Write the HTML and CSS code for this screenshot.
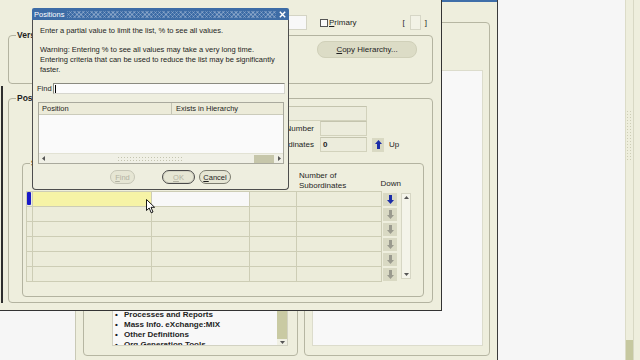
FILE: index.html
```html
<!DOCTYPE html>
<html>
<head>
<meta charset="utf-8">
<title>Positions</title>
<link rel="stylesheet" href="styles.css">
</head>
<body>
<div class="screen">
  <div class="desk">

    <div class="win nav">
      <div class="nav-title"></div>
      <div class="nav-body">
        <div class="nframe nleft">
          <div class="nlist">
            <ul class="items">
              <li>Work Structures</li>
              <li>Total Compensation</li>
              <li>Processes and Reports</li>
              <li>Mass Info. eXchange:MIX</li>
              <li>Other Definitions</li>
              <li>Org Generation Tools</li>
            </ul>
            <div class="lscroll">
              <div class="ltrack"><div class="lthumb"></div></div>
              <div class="larrow"><svg width="5" height="3" viewBox="0 0 5 3"><path d="M0 0H5L2.5 3Z" fill="#555"/></svg></div>
            </div>
          </div>
        </div>
        <div class="nframe nright"><div class="nwhite"></div></div>
      </div>
    </div>

    <div class="win main">
      <div class="toprow">
        <span class="tfield"></span>
        <span class="chk"><span class="box"></span><u>P</u>rimary</span>
        <span class="brk"><span>[</span><span class="bbox"></span><span>]</span></span>
      </div>

      <div class="frame ver">
        <div class="legend">Version</div>
        <div class="ver-body"><span class="pill"><u>C</u>opy Hierarchy...</span></div>
      </div>

      <div class="frame pos">
        <div class="legend">Position</div>
        <div class="prow ra"><span class="fld wide"></span></div>
        <div class="prow"><span class="plabel">Number</span><span class="fld"></span></div>
        <div class="prow rc">
          <span class="plabel">Subordinates</span><span class="fld"><b>0</b></span>
          <span class="arrbtn up"><svg width="7" height="9" viewBox="0 0 7 9"><path d="M3.5 0L7 4H5V9H2V4H0Z" fill="#1b2da8"/></svg></span>
          <span class="uptext">Up</span>
        </div>

        <div class="frame sub">
          <div class="legend">Subordinates</div>
          <div class="sub-body">
            <div class="gridwrap">
              <div class="thead">
                <span></span><span></span><span></span><span></span>
                <span class="hnum">Number of<br>Subordinates</span>
                <span class="hdown">Down</span>
              </div>
              <div class="rows">
                <div class="tr">
                  <span class="c ind"><i class="mark"></i></span><span class="c cur"></span><span class="c wht"></span><span class="c"></span><span class="c"></span>
                  <span class="dcell"><span class="arrbtn on"><svg width="7" height="9" viewBox="0 0 7 9"><path d="M3.5 9L7 5H5V0H2V5H0Z" fill="#1b2da8"/></svg></span></span>
                </div>
                <div class="tr">
                  <span class="c ind"></span><span class="c"></span><span class="c"></span><span class="c"></span><span class="c"></span>
                  <span class="dcell"><span class="arrbtn"><svg width="7" height="9" viewBox="0 0 7 9"><path d="M3.5 9L7 5H5V0H2V5H0Z" fill="#9a9a8e"/></svg></span></span>
                </div>
                <div class="tr">
                  <span class="c ind"></span><span class="c"></span><span class="c"></span><span class="c"></span><span class="c"></span>
                  <span class="dcell"><span class="arrbtn"><svg width="7" height="9" viewBox="0 0 7 9"><path d="M3.5 9L7 5H5V0H2V5H0Z" fill="#9a9a8e"/></svg></span></span>
                </div>
                <div class="tr">
                  <span class="c ind"></span><span class="c"></span><span class="c"></span><span class="c"></span><span class="c"></span>
                  <span class="dcell"><span class="arrbtn"><svg width="7" height="9" viewBox="0 0 7 9"><path d="M3.5 9L7 5H5V0H2V5H0Z" fill="#9a9a8e"/></svg></span></span>
                </div>
                <div class="tr">
                  <span class="c ind"></span><span class="c"></span><span class="c"></span><span class="c"></span><span class="c"></span>
                  <span class="dcell"><span class="arrbtn"><svg width="7" height="9" viewBox="0 0 7 9"><path d="M3.5 9L7 5H5V0H2V5H0Z" fill="#9a9a8e"/></svg></span></span>
                </div>
                <div class="tr">
                  <span class="c ind"></span><span class="c"></span><span class="c"></span><span class="c"></span><span class="c"></span>
                  <span class="dcell"><span class="arrbtn"><svg width="7" height="9" viewBox="0 0 7 9"><path d="M3.5 9L7 5H5V0H2V5H0Z" fill="#9a9a8e"/></svg></span></span>
                </div>
              </div>
            </div>
            <div class="vs">
              <svg width="5" height="3" viewBox="0 0 5 3"><path d="M2.5 0L5 3H0Z" fill="#555"/></svg>
              <svg width="5" height="3" viewBox="0 0 5 3"><path d="M0 0H5L2.5 3Z" fill="#555"/></svg>
            </div>
          </div>
        </div>
      </div>
    </div>

    <div class="dialog">
      <div class="dtitle">
        <span class="dname">Positions</span>
        <span class="dtex"></span>
        <svg class="dx" width="7" height="7" viewBox="0 0 7 7"><path d="M0.8 0.8L6.2 6.2M6.2 0.8L0.8 6.2" stroke="#fff" stroke-width="1.4"/></svg>
      </div>
      <div class="dbody">
        <p class="msg">Enter a partial value to limit the list, % to see all values.</p>
        <p class="msg warn">Warning: Entering % to see all values may take a very long time.<br>Entering criteria that can be used to reduce the list may be significantly<br>faster.</p>
        <div class="findrow"><span class="flab">Find</span><span class="ffield"><span class="caret"></span></span></div>
        <div class="lov">
          <div class="lhead"><span class="h1">Position</span><span class="h2">Exists in Hierarchy</span></div>
          <div class="lbody"></div>
          <div class="hscroll">
            <span class="ha"><svg width="3" height="5" viewBox="0 0 3 5"><path d="M0 2.5L3 0V5Z" fill="#555"/></svg></span>
            <span class="htrack"><span class="hgrip"></span><span class="hblk"></span></span>
            <span class="ha"><svg width="3" height="5" viewBox="0 0 3 5"><path d="M3 2.5L0 0V5Z" fill="#555"/></svg></span>
          </div>
        </div>
        <div class="btns">
          <span class="btn dis bfind"><u>F</u>ind</span>
          <span class="btn dis bok"><u>O</u>K</span>
          <span class="btn bcancel"><u>C</u>ancel</span>
        </div>
      </div>
    </div>

    <svg class="cursor" width="10" height="15" viewBox="0 0 10 15"><path d="M0.5 0.5V11.5L3.2 9L5.2 13.8L7 13L5 8.3H8.6Z" fill="#fff" stroke="#000" stroke-width="0.9" stroke-linejoin="round"/></svg>
  </div>

  <div class="rstrip">
    <div class="rscroll"><div class="rgrip"></div><div class="rthumb"></div></div>
    <div class="rborder"></div>
  </div>
</div>
</body>
</html>
```

FILE: styles.css
```css
* { box-sizing: border-box; margin: 0; padding: 0; }

body {
  margin: 0;
  width: 640px;
  height: 360px;
  overflow: hidden;
  font-family: "Liberation Sans", Arial, sans-serif;
  font-size: 8px;
  color: #1e1e1e;
  background: #f5f5f5;
}

.screen { display: flex; width: 640px; height: 360px; }

.desk { position: relative; flex: 1; overflow: hidden; background: #f6f6f6; }

/* right strip */
.rstrip { width: 15px; display: flex; background: #eeeedd; border-left: 1px solid #dcdcc8; }
.rscroll { width: 7px; display: flex; flex-direction: column; justify-content: space-between; padding-top: 110px; }
.rgrip {
  height: 50px;
  background-image: radial-gradient(circle, #cdcdb6 0.7px, transparent 1px);
  background-size: 3px 3px;
}
.rthumb { height: 20px; background: #c6c8a0; }
.rborder { flex: 1; border-left: 1px solid #d8d8c4; }

/* windows on the desktop */
.win { position: absolute; }

.nav {
  left: 75px; top: -21px; width: 423px; height: 400px;
  background: #eeeedd;
  border-left: 1px solid #c9c9b6;
  border-right: 1px solid #3a3a3a;
}
.nav-title { height: 23px; background: #3f6ea8; }
.nav-body { display: flex; gap: 6px; padding: 20px 7px 0 7px; }
.nframe {
  height: 334px;
  border: 1px solid #b6b6a2;
  border-radius: 4px;
  display: flex;
  flex-direction: column;
  justify-content: flex-end;
}
.nleft { width: 215px; padding: 0 9px 9px 28px; }
.nright { width: 186px; padding: 47px 6px 9px 7px; }
.nwhite { flex: 1; background: #f8f8f8; border: 1px solid #dcdccc; }

.nlist { height: 300px; display: flex; background: #f8f8f8; border: 1px solid #d2d2c2; overflow: hidden; }
.items {
  flex: 1;
  list-style: none;
  display: flex;
  flex-direction: column;
  justify-content: flex-end;
  margin-bottom: -5px;
  padding-left: 2px;
  font-weight: bold;
  line-height: 10px;
  white-space: nowrap;
}
.items li { display: flex; }
.items li::before { content: "\2022"; width: 9px; }
.lscroll { width: 10px; display: flex; flex-direction: column; background: #f0f0e4; }
.ltrack { flex: 1; display: flex; flex-direction: column; justify-content: flex-end; }
.lthumb { height: 70px; background: #c9caa3; }
.larrow { height: 6px; display: flex; align-items: center; justify-content: center; }

/* main form window */
.main {
  left: 0; top: 0; width: 442px; height: 311px;
  background: #eeeedd;
  border-right: 1px solid #333;
  border-bottom: 1px solid #333;
  padding: 15px 8px 0 8px;
}
.main::before {
  content: "";
  position: absolute;
  left: 1px; top: 86px;
  width: 2px; height: 217px;
  background: #2e2e2e;
}

.toprow { display: flex; align-items: center; height: 15px; }
.tfield { margin-left: 192px; width: 107px; height: 15px; background: #f8f8f8; border: 1px solid #d4d4c4; }
.chk { margin-left: 13px; display: flex; align-items: center; }
.chk .box { width: 8px; height: 8px; border: 1px solid #555; background: #fafafa; margin-right: 1px; }
.brk { margin-left: auto; margin-right: 6px; display: flex; align-items: center; gap: 5px; font-size: 8px; }
.bbox { width: 11px; height: 15px; background: #f2f2e6; border: 1px solid #d6d6c6; margin-right: -1px; }

.frame { border: 1px solid #b3b3a0; border-radius: 4px; }
.legend {
  margin: -6px 0 0 7px;
  height: 11px;
  line-height: 11px;
  padding: 0 1px;
  width: max-content;
  background: #eeeedd;
  font-weight: bold;
  font-size: 8.5px;
}

.ver { margin-top: 5px; height: 49px; }
.ver-body { display: flex; justify-content: flex-end; padding-right: 15px; }
.pill {
  width: 100px; height: 17px;
  border-radius: 8px;
  background: #dcdcc6;
  border: 1px solid #d0d0b9;
  display: flex; align-items: center; justify-content: center;
}

.pos { margin-top: 14px; height: 205px; }
.prow { display: flex; align-items: center; height: 15px; padding-left: 191px; }
.prow.ra { margin-top: 2px; padding-left: 111px; }
.prow.rc { margin-top: 1px; }
.plabel { width: 114px; margin-right: 6px; text-align: right; white-space: nowrap; }
.fld {
  width: 47px; height: 15px;
  background: #ececdc;
  border: 1px solid #d2d2bc;
  border-top-color: #c4c4ae;
  display: flex; align-items: center;
  padding-left: 2px;
}
.fld.wide { width: 247px; }
.arrbtn {
  width: 12px; height: 14px;
  background: #d9d9c3;
  display: flex; align-items: center; justify-content: center;
}
.arrbtn.up { margin-left: 5px; }
.uptext { margin-left: 5px; }

.sub { margin: 11px 0 0 13px; width: 402px; height: 134px; }
.sub .legend { margin-left: 7px; }
.sub-body { display: flex; padding-left: 3px; margin-top: 1px; }

.gridwrap { width: 372px; }
.thead {
  display: grid;
  grid-template-columns: 6px 119px 98px 47px 85px 16px;
  height: 21px;
  padding-left: 1px;
  line-height: 10px;
}
.hnum { align-self: end; padding-left: 2px; white-space: nowrap; }
.hdown { align-self: end; display: flex; justify-content: flex-end; margin-right: -3px; padding-bottom: 2px; white-space: nowrap; }

.rows { border-left: 1px solid #cdcdb5; }
.tr { display: grid; grid-template-columns: 6px 119px 98px 47px 85px 16px; height: 15px; }
.tr:first-child { height: 16px; }
.tr:first-child .c { border-top: 1px solid #cdcdb5; }
.c { background: #ececda; border-right: 1px solid #cdcdb5; border-bottom: 1px solid #cdcdb5; }
.c.cur { background: #f6f3a6; }
.c.wht { background: #f8f8f8; }
.c.ind { display: flex; }
.mark { display: block; width: 4px; height: 13px; background: #1818c8; border-radius: 1px; }
.dcell { display: flex; align-items: center; padding-left: 1px; }
.dcell .arrbtn { width: 14px; height: 13px; }

.vs {
  width: 10px; height: 86px;
  margin: 23px 0 0 3px;
  background: #f4f4ea;
  border: 1px solid #d6d6c4;
  display: flex; flex-direction: column; justify-content: space-between; align-items: center;
  padding: 2px 0;
}

/* dialog */
.dialog {
  position: absolute;
  left: 32px; top: 8px;
  width: 257px; height: 182px;
  display: flex; flex-direction: column;
  font-size: 7.5px;
}
.dtitle {
  height: 12px;
  background: #3d6ca6;
  border-radius: 2px 2px 0 0;
  display: flex; align-items: center;
  padding: 0 2px;
  color: #fff;
}
.dtex {
  flex: 1; height: 7px;
  margin: 0 3px 0 3px;
  background-image:
    repeating-linear-gradient(45deg, rgba(255,255,255,0.22) 0 1px, transparent 1px 3px),
    repeating-linear-gradient(135deg, rgba(255,255,255,0.22) 0 1px, transparent 1px 3px);
}
.dx { margin-right: 1px; }
.dbody {
  flex: 1;
  background: #eeeedf;
  border: 1px solid #4d4d4d;
  border-top: 0;
  border-radius: 0 0 4px 4px;
  padding: 6px 3px 0 4px;
}
.msg { margin-left: 3px; line-height: 10px; white-space: nowrap; }
.warn { margin-top: 9px; }
.findrow { margin-top: 8px; display: flex; align-items: center; height: 11px; }
.flab { width: 16px; }
.ffield {
  flex: 1; height: 11px;
  background: #fbfbfb;
  border: 1px solid #d6d6ce;
  border-top-color: #8a8a80;
  border-left-color: #8a8a80;
}
.caret { display: block; width: 1px; height: 8px; background: #000; margin: 1px 0 0 1px; }

.lov {
  margin: 8px 1px 0 1px;
  height: 62px;
  border: 1px solid #a9a99d;
  display: flex; flex-direction: column;
  background: #fafafa;
}
.lhead { height: 12px; display: flex; background: #ecebd9; border-bottom: 1px solid #cbcbbb; }
.h1 { width: 133px; padding-left: 3px; border-right: 1px solid #c4c4b4; display: flex; align-items: center; }
.h2 { padding-left: 4px; display: flex; align-items: center; }
.lbody { flex: 1; }
.hscroll { height: 10px; display: flex; align-items: center; background: #f0f0e6; border-top: 1px solid #e2e2d4; }
.ha { width: 8px; display: flex; align-items: center; justify-content: center; }
.htrack { flex: 1; display: flex; align-items: center; height: 8px; }
.hgrip {
  margin-left: 70px; width: 67px; height: 6px;
  background-image: radial-gradient(circle, #c4c4b0 0.7px, transparent 1px);
  background-size: 3px 3px;
}
.hblk { margin-left: auto; margin-right: 1px; width: 20px; height: 8px; background: #c6c6aa; }

.btns { margin-top: 6px; display: flex; height: 14px; }
.btn {
  height: 14px;
  border-radius: 7px;
  display: flex; align-items: center; justify-content: center;
  border: 1px solid #8e8e80;
  background: #e6e6d4;
}
.btn.dis { color: #b2b2a2; border-color: #c6c6b6; }
.bfind { margin-left: 73px; width: 25px; }
.bok { margin-left: 27px; width: 33px; box-shadow: inset 0 0 0 1px #d4d4c4; }
.btn.dis.bok { border-color: #4a4a4a; }
.bcancel { margin-left: 4px; width: 32px; border-color: #7d7d70; }

.cursor { position: absolute; left: 146px; top: 199px; }
```
